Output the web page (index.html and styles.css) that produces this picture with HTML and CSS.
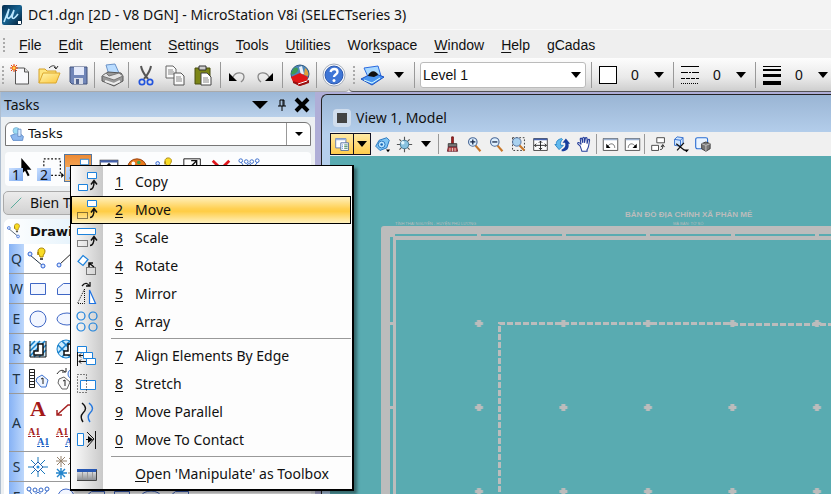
FILE: index.html
```html
<!DOCTYPE html>
<html lang="en">
<head>
<meta charset="utf-8">
<title>MicroStation V8i</title>
<link rel="stylesheet" href="styles.css">
</head>
<body>
<svg class="defs" aria-hidden="true">
  <defs>
    <linearGradient id="logo" x1="0" y1="0" x2="1" y2="1"><stop offset="0" stop-color="#022a4d"/><stop offset=".5" stop-color="#16618f"/><stop offset="1" stop-color="#041c33"/></linearGradient>
    <linearGradient id="folder" x1="0" y1="0" x2="1" y2="1"><stop offset="0" stop-color="#fff6b0"/><stop offset="1" stop-color="#fcc63c"/></linearGradient>
    <linearGradient id="metal" x1="0" y1="0" x2="0" y2="1"><stop offset="0" stop-color="#f4f4f4"/><stop offset="1" stop-color="#8c9096"/></linearGradient>
    <symbol id="new" viewBox="0 0 24 24"><path d="M6.500 5h9l4 4v12h-13z" fill="#f8f8fa" stroke="#555"/><path d="M15.500 5v4h4" fill="#ddd" stroke="#555"/><path d="M5 1v8M1 5h8M2 2l6 6M8 2L2 8" stroke="#e33b12"/><circle cx="5" cy="5" r="2" fill="#ffd04a" stroke="#f06a18"/></symbol>
    <symbol id="open" viewBox="0 0 24 24"><path d="M2 20V6h6l2 2h9v4" fill="#ffe680" stroke="#d6a128"/><path d="M2 20l4-10h17l-4 10z" fill="url(#folder)" stroke="#dba72d"/><path d="M12 5c3-3 6-3 7 0m-2-1l2 2 2-3" fill="none" stroke="#333"/></symbol>
    <symbol id="save" viewBox="0 0 24 24"><path d="M4 4h17v17H6l-2-2z" fill="#7186b8" stroke="#43537c"/><path d="M8 4h10v8H8z" fill="#e4eafa"/><path d="M8 15h9v6H8z" fill="#d7dce8"/><path d="M10 16h3v5h-3z" fill="#53648f"/></symbol>
    <symbol id="print" viewBox="0 0 24 24"><path d="M6 2l9-1 4 9-10 2z" fill="#b9dcff" stroke="#6b93c8"/><path d="M2 13l6-4 13 1 2 3v5l-9 5-12-5z" fill="#999" stroke="#555"/><path d="M2 13l12 4 9-4-4-3-10 3-3-3z" fill="#e3e3e3" stroke="#777"/><path d="M5 18l9 3 6-3" stroke="#eee" stroke-width="2" fill="none"/></symbol>
    <symbol id="cut" viewBox="0 0 24 24"><path d="M7 3c1 6 4 9 7 13M17 3c-1 6-4 9-7 13" fill="none" stroke="#555" stroke-width="2"/><circle cx="8" cy="19" r="2.7" fill="none" stroke="#2254dd" stroke-width="1.7"/><circle cx="16" cy="19" r="2.7" fill="none" stroke="#2254dd" stroke-width="1.7"/></symbol>
    <symbol id="copy" viewBox="0 0 24 24"><path d="M3 3h7l3 3v9H3z" fill="#fafafa" stroke="#666"/><path d="M5 7h5M5 9h6M5 11h6" stroke="#888"/><path d="M11 10h7l3 3v9H11z" fill="#fafafa" stroke="#555"/><path d="M13 14h5M13 16h6M13 18h6" stroke="#888"/></symbol>
    <symbol id="paste" viewBox="0 0 24 24"><path d="M4 5h15v16H4z" fill="#7b8516" stroke="#4b4e12"/><path d="M8 3h7v4H8z" fill="#ccc" stroke="#333"/><path d="M10 10h6l4 4v8H10z" fill="#fff" stroke="#444"/><path d="M12 15h5M12 17h6M12 19h6" stroke="#888"/></symbol>
    <symbol id="undo" viewBox="0 0 24 24"><path d="M8 14c3-6 11-5 11 0 0 3-2 4-3 5" fill="none" stroke="#888" stroke-width="1.3"/><path d="M4 10v8h8z"/></symbol>
    <symbol id="redo" viewBox="0 0 24 24"><path d="M15 14c-3-6-11-5-11 0 0 3 2 4 3 5" fill="none" stroke="#888" stroke-width="1.3"/><path d="M19 10v8h-8z"/></symbol>
    <symbol id="globe" viewBox="0 0 24 24"><circle cx="12" cy="11" r="9" fill="#4b86ba" stroke="#305a83"/><path d="M6 5c4-2 5 2 3 4s-5 4-6 1z" fill="#3d9a52"/><path d="M11 4l3-1 2 8-3 1z" fill="#e9eef5"/><path d="M17 5c3 2 4 6 3 8l-4-1z" fill="#e1a03c"/><path d="M3 14l9-4 8 4-2 7-7 2-6-4z" fill="#e01616"/><path d="M5 18l6 2 10-3v3l-9 3-7-3z" fill="#991010"/><path d="M10 21l9-3" stroke="#fff"/></symbol>
    <symbol id="help" viewBox="0 0 24 24"><circle cx="12" cy="12" r="11" fill="#fff" stroke="#a2abb8"/><circle cx="12" cy="12" r="9" fill="#3f76d6" stroke="#2a56ad"/><path d="M8.500 9c1-4 7-4 7 0 0 2.500-3.500 2.500-3.500 5" fill="none" stroke="#fff" stroke-width="2.300"/><circle cx="12" cy="17.500" r="1.500" fill="#fff"/></symbol>
    <symbol id="level" viewBox="0 0 24 24"><path d="M4 5l14-2 3 10-12 3z" fill="#a8d8ff" stroke="#2b6be0"/><path d="M1 16l12-6 11 4-12 8z" fill="#4b97f2" stroke="#1950c4"/><path d="M8 13c2-6 8-6 10-1l-4 2z" fill="#111"/><path d="M4 17l8 3 8-5" fill="none" stroke="#dff"/></symbol>
    <symbol id="sheet" viewBox="0 0 20 20"><path d="M2 3h12v11H2z" fill="#fff" stroke="#5170ad"/><path d="M2 3h12v2H2z" fill="#9ab2dd"/><path d="M8 8h9v9H8z" fill="#fff" stroke="#44639b"/><path d="M12 10.500h4M12 12.500h4M12 14.500h4" stroke="#2f7a4f"/><path d="M9.500 10.500h1M9.500 12.500h1M9.500 14.500h1" stroke="#3274d8"/></symbol>
    <symbol id="disc" viewBox="0 0 20 20"><path d="M2 12L6 5l9-3 3 3-3 9-8 3z" fill="#7cc4f4" stroke="#1869b8"/><circle cx="9" cy="10" r="4" fill="#bfe7ff" stroke="#1869b8"/><circle cx="9" cy="10" r="1.500" fill="#1869b8"/><path d="M14 16h5l-2.500 3z"/></symbol>
    <symbol id="sun" viewBox="0 0 20 20"><path d="M10 1v18M1 10h18M4 4l12 12M16 4L4 16" stroke="#555" stroke-width="1.300"/><circle cx="10" cy="10" r="5" fill="#88c2df" stroke="#3b7390"/><circle cx="8" cy="8" r="2" fill="#e2f7ff"/></symbol>
    <symbol id="brush" viewBox="0 0 20 20"><path d="M9 1h2v9H9z" fill="#b92222" stroke="#611"/><path d="M5 9h10v4H5z" fill="#777" stroke="#333"/><path d="M5 13h10l1 5H4z" fill="#bc4844" stroke="#623"/><path d="M7 14v4M10 14v4M13 14v4" stroke="#ddd"/></symbol>
    <symbol id="zin" viewBox="0 0 20 20"><path d="M11 11l6 7" stroke="#c8782a" stroke-width="2.500"/><circle cx="8" cy="7" r="5" fill="#dff0ff" stroke="#486796" stroke-width="1.300"/><path d="M5 7h6M8 4v6" stroke="#124" stroke-width="1.500"/></symbol>
    <symbol id="zout" viewBox="0 0 20 20"><path d="M11 11l6 7" stroke="#c8782a" stroke-width="2.500"/><circle cx="8" cy="7" r="5" fill="#dff0ff" stroke="#486796" stroke-width="1.300"/><path d="M5 7h6" stroke="#124" stroke-width="1.500"/></symbol>
    <symbol id="zwin" viewBox="0 0 20 20"><path d="M3 2h14v15H3z" fill="none" stroke="#222" stroke-dasharray="2 2"/><path d="M11 11l6 6" stroke="#c8782a" stroke-width="2.500"/><circle cx="8" cy="7" r="5" fill="#a9d1ef" stroke="#486796"/></symbol>
    <symbol id="fit" viewBox="0 0 20 20"><path d="M2 3h16v14H2z" fill="#fff" stroke="#333"/><path d="M2 3h16v2H2z" fill="#4562ad"/><path d="M10 6v10M3 11h14M8 8l2-2 2 2M8 14l2 2 2-2M5 9l-2 2 2 2M15 9l2 2-2 2" fill="none" stroke="#111"/></symbol>
    <symbol id="rotview" viewBox="0 0 20 20"><path d="M9 3C4 4 2 7 3 10H1l5 6 5-5H8c-1-3 0-5 2-7z" fill="#60b9ed" stroke="#2280c4"/><path d="M9 18c7 0 9-4 8-9h2l-5-6-4 5h3c1 4 0 6-4 8z" fill="#183e9d"/></symbol>
    <symbol id="hand" viewBox="0 0 20 20"><path d="M5 12L2 9c0-2 2-2 4 1L5 4c0-2 2-2 2 0l1 4V3c0-2 2-2 2 0v5l1-5c0-2 2-1 2 0v6l1-4c1-2 2-1 2 0-1 5-1 9-3 11v2H7z" fill="#fff" stroke="#263f9b" stroke-width="1.300"/></symbol>
    <symbol id="prev" viewBox="0 0 20 20"><path d="M1.500 3h17v14h-17z" fill="#fff" stroke="#444"/><path d="M2 3h16v2H2z" fill="#9ab0d0"/><path d="M7 12c2-4 8-4 8 2" fill="none" stroke="#666"/><path d="M5 9v5h5z"/></symbol>
    <symbol id="next" viewBox="0 0 20 20"><path d="M1.500 3h17v14h-17z" fill="#fff" stroke="#444"/><path d="M2 3h16v2H2z" fill="#9ab0d0"/><path d="M13 12c-2-4-8-4-8 2" fill="none" stroke="#666"/><path d="M15 9v5h-5z"/></symbol>
    <symbol id="cview" viewBox="0 0 20 20"><path d="M8 2h9v6H8zM2 11h8v6H2z" fill="#fff" stroke="#333"/><path d="M12 16c3 0 3-2 3-5m-2 2l2-3 2 3" fill="none" stroke="#111"/></symbol>
    <symbol id="clip" viewBox="0 0 20 20"><path d="M3 4l3-3 7 1v7l-3 3-7-1zM3 4l7 1v7M10 5l3-3" fill="#cfe5ff" stroke="#2363c9"/><path d="M5 9l10 8M14 8L6 17" stroke="#111" stroke-width="1.500"/><path d="M14 16h6l-3 3z"/></symbol>
    <symbol id="mask" viewBox="0 0 20 20"><rect x="2" y="2" width="14" height="13" rx="2" fill="#eaf4ff" stroke="#2a6dd2" stroke-width="1.300"/><path d="M9 9l5-2 5 2v6l-5 3-5-3z" fill="#777" stroke="#333"/><path d="M9 9l5 2 5-2M14 11v7" stroke="#ccc" fill="none"/></symbol>

    <symbol id="m1" viewBox="0 0 24 24"><path d="M12.500 2.500h9v6h-9zM3.500 14.500h9v6h-9z" fill="#fff" stroke="#1d82dc"/><path d="M15 19.500c3 0 4-3 4-8m-3 3l3-4 3 4" fill="none" stroke="#111" stroke-width="1.500"/></symbol>
    <symbol id="m2" viewBox="0 0 24 24"><path d="M12.500 2.500h9v6h-9z" fill="#fff" stroke="#1d82dc"/><path d="M2.500 14.500h10v6h-10z" fill="none" stroke="#111" stroke-dasharray="1 1"/><path d="M15 19.500c3 0 4-3 4-8m-3 3l3-4 3 4" fill="none" stroke="#111" stroke-width="1.500"/></symbol>
    <symbol id="m3" viewBox="0 0 24 24"><path d="M2.500 2.500h18v6h-18z" fill="#fff" stroke="#1d82dc"/><path d="M2.500 14.500h10v6h-10z" fill="none" stroke="#111" stroke-dasharray="1 1"/><path d="M15 19.500c3 0 4-3 4-8m-3 3l3-4 3 4" fill="none" stroke="#111" stroke-width="1.500"/></symbol>
    <symbol id="m4" viewBox="0 0 24 24"><path d="M8 1.500l5 4-5 6-5-4z" fill="#fff" stroke="#1d82dc" stroke-width="1.200"/><path d="M11.500 13.500h9v7h-9z" fill="none" stroke="#111" stroke-dasharray="1 1"/><path d="M19 13l-5-4m0 4V9h4" fill="none" stroke="#111" stroke-width="1.500"/></symbol>
    <symbol id="m5" viewBox="0 0 24 24"><path d="M9.500 7v14.500h-7z" fill="none" stroke="#111" stroke-dasharray="1 1"/><path d="M14.500 8v13.500h6z" fill="#fff" stroke="#1d72e2" stroke-width="1.200"/><path d="M7 4c3-4 6-3 7 0m-3 0h4V0" fill="none" stroke="#111" stroke-width="1.300"/></symbol>
    <symbol id="m6" viewBox="0 0 24 24" fill="none" stroke="#1d82dc" stroke-width="1.200"><circle cx="6" cy="6" r="4"/><circle cx="18" cy="6" r="4"/><circle cx="6" cy="17" r="4"/><circle cx="18" cy="17" r="4"/></symbol>
    <symbol id="m7" viewBox="0 0 24 24"><path d="M2.500 2.500h9v6h-9zM8.500 8.500h9v6h-9zM11.500 14.500h9v6h-9z" fill="#fff" stroke="#1d82dc"/><path d="M2.500 8v14M8 11.500H4l2-2m-2 2l2 2M11 17.500H4l2-2m-2 2l2 2" fill="none" stroke="#111"/></symbol>
    <symbol id="m8" viewBox="0 0 24 24"><path d="M5.500 8.500h15v9h-15z" fill="#fff" stroke="#1d82dc"/><path d="M2.500 2.500h9v18h-9z" fill="none" stroke="#111" stroke-dasharray="1 2"/></symbol>
    <symbol id="m9" viewBox="0 0 24 24" fill="none" stroke-width="1.400"><path d="M7 3c5 4 4 7 1 10s-2 6 0 9" stroke="#111"/><path d="M14 3c5 4 4 7 1 10s-2 6 0 9" stroke="#2578df"/></symbol>
    <symbol id="m0" viewBox="0 0 24 24"><path d="M2.500 5.500h6v12h-6z" fill="#fff" stroke="#1d82dc"/><path d="M20.500 3v18M11 11.500h6M12 4l7 7-7 8" fill="none" stroke="#111"/><path d="M13 8l5 3.500-5 3.500z"/></symbol>
    <symbol id="mt" viewBox="0 0 24 24"><path d="M2 7h20v11H2z" fill="url(#metal)"/><path d="M2 7h20v3H2z" fill="#2858b2"/><path d="M7.500 10v7M12.500 10v7M17.500 10v7" stroke="#999"/><path d="M21.500 8v10.500H2" fill="none" stroke="#444"/></symbol>
    <symbol id="key" viewBox="0 0 24 24"><path d="M4 8l13 11" stroke="#234"/><circle cx="4" cy="7" r="2" fill="#dce9ff" stroke="#2f62d2"/><circle cx="17" cy="19" r="2" fill="#dce9ff" stroke="#2f62d2"/><path d="M12 8V4c0-4 7-4 7 0 0 3-2 3-2 6h-3c0-2-2-2-2-5z" fill="#f9dc25" stroke="#a88307"/><path d="M14 11h3v2h-3z" fill="#555"/></symbol>
    <symbol id="line" viewBox="0 0 24 24"><path d="M5 18L20 4" stroke="#222"/><circle cx="5" cy="18" r="2" fill="#dce9ff" stroke="#2f62d2"/><circle cx="20" cy="4" r="2" fill="#dce9ff" stroke="#2f62d2"/></symbol>
    <symbol id="rect" viewBox="0 0 24 24"><path d="M4.500 6.500h15v11h-15z" fill="#f2f6ff" stroke="#3f67c5"/></symbol>
    <symbol id="poly" viewBox="0 0 24 24"><path d="M3.500 17.500v-6l6-5h13v11z" fill="#f2f6ff" stroke="#3f67c5"/></symbol>
    <symbol id="circ" viewBox="0 0 24 24"><circle cx="12" cy="12" r="8" fill="#f2f6ff" stroke="#3f67c5"/></symbol>
    <symbol id="oval" viewBox="0 0 24 24"><ellipse cx="13" cy="12" rx="10" ry="6" fill="#f2f6ff" stroke="#3f67c5"/></symbol>
    <symbol id="hatch" viewBox="0 0 24 24"><path d="M4 4h16v16H4z" fill="#c9ebff"/><path d="M4 9l5-5M4 14L14 4M4 19L19 4M8 20L20 8M13 20l7-7" stroke="#147fcb" stroke-width="1.500"/><path d="M8 18v-4h4V7h5v11z" fill="#fff" stroke="#111" stroke-width="1.500"/><path d="M4 4v16h16V4" fill="none" stroke="#111"/></symbol>
    <symbol id="cross" viewBox="0 0 24 24"><circle cx="12" cy="12" r="9" fill="#c9ebff" stroke="#147fcb"/><path d="M4 8l12 12M8 4l12 12M4 16L16 4M8 20L20 8" stroke="#147fcb" stroke-width="1.500"/><path d="M10 18v-4h4V7h4v11z" fill="#fff" stroke="#111" stroke-width="1.500"/></symbol>
    <symbol id="tag" viewBox="0 0 24 24"><path d="M3.500 2.500h5v18h-5zM3 5.500h5M3 8.500h5M3 11.500h5M3 14.500h5M3 17.500h5" fill="#fff" stroke="#222"/><path d="M11 11l5-3 6 5-2 7h-5l-5-6z" fill="#eef5ff" stroke="#3f73d1"/><path d="M15 12l2-1v6" fill="none" stroke="#222"/></symbol>
    <symbol id="tag2" viewBox="0 0 24 24"><path d="M5 12l5-2 6 5-3 7H8l-4-6z" fill="#fafafa" stroke="#666"/><path d="M9 14l2-1v6M3 7c3-5 7-4 8-2m-3 0h4V1" fill="none" stroke="#222"/><circle cx="19" cy="7" r="5" fill="#eef5ff" stroke="#3f73d1"/></symbol>
    <symbol id="spark" viewBox="0 0 24 24"><path d="M12 2v20M2 12h20M5 5l14 14M19 5L5 19" stroke="#1979be"/><path d="M12 7l5 5-5 5-5-5z" fill="#fff" stroke="#235eaa"/><circle cx="12" cy="12" r="1.500" fill="#248bdc"/></symbol>
    <symbol id="sparks" viewBox="0 0 24 24"><path d="M7 1v11M2 6h11M3 2l8 8M11 2l-8 8M19 1v11M15 3l8 7M22 2l-8 8" stroke="#96826d"/><path d="M7 13v11M2 18h11M3 14l8 8M11 14l-8 8" stroke="#2384cb" stroke-width="1.400"/><path d="M19 13v11M14 18h10" stroke="#96826d"/></symbol>
    <symbol id="arrow" viewBox="0 0 24 24"><path d="M8 1v18l4-4 3 6 2-1-3-6h5z"/></symbol>
    <symbol id="fence" viewBox="0 0 24 24"><path d="M2 2h18v18H2z" fill="none" stroke="#111" stroke-width="1.300" stroke-dasharray="2 2"/><path d="M21 17l3 3-3 3z"/></symbol>
    <symbol id="palette" viewBox="0 0 24 24"><ellipse cx="12" cy="11" rx="10" ry="9" fill="#e8791d" stroke="#913a08"/><circle cx="8" cy="7" r="2" fill="#fff"/><circle cx="14" cy="6" r="2" fill="#41a650"/></symbol>
    <symbol id="points" viewBox="0 0 24 24"><path d="M3 5l4 6 5-4 5 4 5-6" fill="none" stroke="#3166c8"/><g fill="#fff" stroke="#3166c8"><circle cx="3" cy="4" r="2"/><circle cx="9" cy="5" r="2"/><circle cx="15" cy="5" r="2"/><circle cx="21" cy="4" r="2"/></g></symbol>
    <symbol id="ref" viewBox="0 0 24 24"><path d="M2 2h18v19H2z" fill="#fff" stroke="#111"/><path d="M8 12l8-8m-6 0h6v6" fill="none" stroke="#111" stroke-width="1.500"/></symbol>
    <symbol id="del" viewBox="0 0 24 24"><path d="M3 4l16 16M21 4L5 20" stroke="#df161b" stroke-width="3"/></symbol>
    <symbol id="task" viewBox="0 0 20 20"><path d="M2 12l10-4 6 5-1 5H5z" fill="#8db8ee" stroke="#5583c4"/><circle cx="9" cy="6" r="4" fill="#9adcf4" stroke="#7aaed2"/><path d="M11 4h4v9h-4z" fill="#d7eaff" stroke="#6289c1"/></symbol>
  </defs>
</svg>

<header class="titlebar">
  <svg class="logo" viewBox="0 0 20 20"><rect width="20" height="20" rx="2" fill="url(#logo)"/><path d="M2 17L7 4 5 12c1 3 4 1 7-7l-2 7c1 3 3 1 6-3" fill="none" stroke="#bde8ff" stroke-width="1.600"/><path d="M16 16h3v3h-3z" fill="#fff"/></svg>
  <h1>DC1.dgn [2D - V8 DGN] - MicroStation V8i (SELECTseries 3)</h1>
</header>
<nav class="menubar">
  <span class="grip"></span>
  <a href="#"><u>F</u>ile</a><a href="#"><u>E</u>dit</a><a href="#">E<u>l</u>ement</a><a href="#"><u>S</u>ettings</a><a href="#"><u>T</u>ools</a><a href="#"><u>U</u>tilities</a><a href="#">Wor<u>k</u>space</a><a href="#"><u>W</u>indow</a><a href="#"><u>H</u>elp</a><a href="#">gCadas</a>
</nav>
<div class="toolbars">
  <div class="bar standard">
    <span class="grip"></span>
    <button aria-label="New"><svg><use href="#new"/></svg></button>
    <button aria-label="Open"><svg><use href="#open"/></svg></button>
    <button aria-label="Save"><svg><use href="#save"/></svg></button>
    <i class="sep"></i>
    <button aria-label="Print"><svg><use href="#print"/></svg></button>
    <i class="sep"></i>
    <button aria-label="Cut"><svg><use href="#cut"/></svg></button>
    <button aria-label="Copy"><svg><use href="#copy"/></svg></button>
    <button aria-label="Paste"><svg><use href="#paste"/></svg></button>
    <i class="sep"></i>
    <button aria-label="Undo"><svg><use href="#undo"/></svg></button>
    <button aria-label="Redo"><svg><use href="#redo"/></svg></button>
    <i class="sep"></i>
    <button aria-label="Connect"><svg><use href="#globe"/></svg></button>
    <i class="sep"></i>
    <button aria-label="Help"><svg><use href="#help"/></svg></button>
  </div>
  <div class="bar attributes">
    <span class="grip"></span>
    <button aria-label="Level manager"><svg><use href="#level"/></svg></button>
    <button class="drop" aria-label="Level options"><i class="caret"></i></button>
    <i class="sep"></i>
    <div class="level"><select aria-label="Active level"><option>Level 1</option></select><i class="caret"></i></div>
    <i class="sep"></i>
    <button class="attr" aria-label="Color"><i class="swatch"></i><span>0</span><i class="caret"></i></button>
    <i class="sep"></i>
    <button class="attr" aria-label="Line style"><svg class="lines" viewBox="0 0 18 20"><path d="M0 1.500h18"/><path d="M0 7.500h18" stroke-dasharray="7 1 2 1"/><path d="M0 13.500h18" stroke-dasharray="4 1"/><path d="M0 18.500h18" stroke-dasharray="1 1"/></svg><span>0</span><i class="caret"></i></button>
    <i class="sep"></i>
    <button class="attr" aria-label="Line weight"><svg class="lines" viewBox="0 0 18 20"><path d="M0 1.500h18"/><path d="M0 5h18" stroke-width="2"/><path d="M0 10.500h18" stroke-width="3"/><path d="M0 18h18" stroke-width="4"/></svg><span>0</span><i class="caret"></i></button>
  </div>
</div>

<main class="workspace">
  <aside class="tasks">
    <header class="tasks-head"><h2>Tasks</h2><i class="caret big"></i><svg class="pin" viewBox="0 0 8 12"><path d="M2 1h4v6M2 1v6M5 1v6M0 7h8M4 7v5" fill="none" stroke="#000"/></svg><svg class="close" viewBox="0 0 16 16"><path d="M2 2l12 12M14 2L2 14" stroke="#000" stroke-width="4"/></svg></header>
    <div class="task-pick"><svg><use href="#task"/></svg><select aria-label="Task"><option>Tasks</option></select><span class="pick-arrow"><i class="caret small"></i></span></div>
    <div class="main-tools">
      <button aria-label="Element selection"><svg><use href="#arrow"/></svg><b>1</b></button>
      <button aria-label="Fence"><svg><use href="#fence"/></svg><b>2</b></button>
      <button class="active" aria-label="Manipulate"><svg><use href="#m1"/></svg><b>3</b></button>
      <button aria-label="View"><svg><use href="#fit"/></svg></button>
      <button aria-label="Attributes"><svg><use href="#palette"/></svg></button>
      <button aria-label="Groups"><svg><use href="#key"/></svg></button>
      <button aria-label="Modify"><svg><use href="#ref"/></svg></button>
      <button aria-label="Delete"><svg><use href="#del"/></svg></button>
      <button aria-label="Measure"><svg><use href="#points"/></svg></button>
    </div>
    <button class="task-tab"><svg viewBox="0 0 16 16"><path d="M2 14L14 2" stroke="#48a392"/></svg>Bien Tap</button>
    <section class="drawing">
      <h3><svg><use href="#key"/></svg>Drawing</h3>
      <div class="row"><kbd>Q</kbd><svg><use href="#key"/></svg><svg><use href="#line"/></svg></div>
      <div class="row"><kbd>W</kbd><svg><use href="#rect"/></svg><svg><use href="#poly"/></svg></div>
      <div class="row"><kbd>E</kbd><svg><use href="#circ"/></svg><svg><use href="#oval"/></svg></div>
      <div class="row"><kbd>R</kbd><svg><use href="#hatch"/></svg><svg><use href="#cross"/></svg></div>
      <div class="row"><kbd>T</kbd><svg><use href="#tag"/></svg><svg><use href="#tag2"/></svg></div>
      <div class="row tall"><kbd>A</kbd><span class="letter">A</span><svg viewBox="0 0 24 24"><path d="M3 18L14 8h8M3 13v5h5" fill="none" stroke="#a52020" stroke-width="1.500"/></svg><span class="pair"><em>A1</em><em>A1</em></span><span class="pair"><em>A1</em><em>A1</em></span></div>
      <div class="row"><kbd>S</kbd><svg><use href="#spark"/></svg><svg><use href="#sparks"/></svg></div>
      <div class="row"><kbd>F</kbd><svg><use href="#points"/></svg><svg><use href="#circ"/></svg><svg><use href="#poly"/></svg><svg><use href="#rect"/></svg><svg><use href="#oval"/></svg><svg><use href="#poly"/></svg></div>
    </section>

    <div class="menu" role="menu">
      <button role="menuitem"><svg><use href="#m1"/></svg><u>1</u><span>Copy</span></button>
      <button role="menuitem" class="hot"><svg><use href="#m2"/></svg><u>2</u><span>Move</span></button>
      <button role="menuitem"><svg><use href="#m3"/></svg><u>3</u><span>Scale</span></button>
      <button role="menuitem"><svg><use href="#m4"/></svg><u>4</u><span>Rotate</span></button>
      <button role="menuitem"><svg><use href="#m5"/></svg><u>5</u><span>Mirror</span></button>
      <button role="menuitem"><svg><use href="#m6"/></svg><u>6</u><span>Array</span></button>
      <hr>
      <button role="menuitem"><svg><use href="#m7"/></svg><u>7</u><span>Align Elements By Edge</span></button>
      <button role="menuitem"><svg><use href="#m8"/></svg><u>8</u><span>Stretch</span></button>
      <button role="menuitem"><svg><use href="#m9"/></svg><u>9</u><span>Move Parallel</span></button>
      <button role="menuitem"><svg><use href="#m0"/></svg><u>0</u><span>Move To Contact</span></button>
      <hr>
      <button role="menuitem"><svg><use href="#mt"/></svg><i></i><span><u>O</u>pen 'Manipulate' as Toolbox</span></button>
    </div>
  </aside>

  <section class="view">
    <header class="view-head"><span class="view-icon"></span><h2>View 1, Model</h2></header>
    <div class="view-tools">
      <span class="split"><button aria-label="View attributes"><svg><use href="#sheet"/></svg></button><button class="arrow" aria-label="View attribute options"><i class="caret"></i></button></span>
      <button aria-label="Display style"><svg><use href="#disc"/></svg></button>
      <button aria-label="Brightness"><svg><use href="#sun"/></svg></button>
      <button class="arrow" aria-label="Brightness options"><i class="caret"></i></button>
      <i class="sep"></i>
      <button aria-label="Update view"><svg><use href="#brush"/></svg></button>
      <button aria-label="Zoom in"><svg><use href="#zin"/></svg></button>
      <button aria-label="Zoom out"><svg><use href="#zout"/></svg></button>
      <button aria-label="Window area"><svg><use href="#zwin"/></svg></button>
      <button aria-label="Fit view"><svg><use href="#fit"/></svg></button>
      <button aria-label="Rotate view"><svg><use href="#rotview"/></svg></button>
      <button aria-label="Pan view"><svg><use href="#hand"/></svg></button>
      <i class="sep"></i>
      <button aria-label="View previous"><svg><use href="#prev"/></svg></button>
      <button aria-label="View next"><svg><use href="#next"/></svg></button>
      <i class="sep"></i>
      <button aria-label="Copy view"><svg><use href="#cview"/></svg></button>
      <button aria-label="Clip volume"><svg><use href="#clip"/></svg></button>
      <button aria-label="Clip mask"><svg><use href="#mask"/></svg></button>
    </div>
    <svg class="canvas" role="img" aria-label="Cadastral map">
      <defs>
        <pattern id="grid" x="106" y="125" width="84.500" height="84" patternUnits="userSpaceOnUse"><path d="M41 39h4v2h2v3h-2v2h-4v-2h-2v-3h2z" fill="#bcbcbc"/></pattern>
      </defs>
      <rect x="110" y="130" width="1600" height="1200" fill="url(#grid)"/>
      <g fill="#bcbcbc">
        <path d="M51 1400V73q0-3 3-3h1700v8H60v1322z"/>
        <path d="M60 78h5v2h1700v4H66v1316h-3V81h-3z"/>
        <path d="M60 166h5v3h-5zM60 250h5v3h-5zM147 78h4v2h-4zM232 78h4v2h-4zM316 78h4v2h-4zM401 78h4v2h-4zM485 78h4v2h-4z"/>
        <text x="65" y="69" class="note">TỈNH THÁI NGUYÊN - HUYỆN PHÚ LƯƠNG</text>
        <text x="295" y="61" class="map-title">BẢN ĐỒ ĐỊA CHÍNH XÃ PHẤN MỄ</text>
        <text x="343" y="69" class="note">MÃ BẢN: TỜ SỐ</text>
      </g>
      <path d="M169.500 1400V167.500H402M402 168.500H1700" fill="none" stroke="#bcbcbc" stroke-width="3" stroke-dasharray="6 2"/>
    </svg>
  </section>
</main>
</body>
</html>
```
FILE: styles.css
```css
* { box-sizing: border-box; }
body {
  margin: 0;
  height: 100vh;
  display: flex;
  flex-direction: column;
  overflow: hidden;
  background: #f0f0f0;
  color: #111;
  font: 14px/20px "Noto Sans", "Open Sans", sans-serif;
}
h1, h2, h3 { margin: 0; font-weight: 400; }
button { display: flex; align-items: center; justify-content: center; padding: 0; border: 0; background: none; color: inherit; font: inherit; flex: none; }
svg { flex: none; display: block; }
select { appearance: none; border: 0; background: none; color: #111; padding: 0; outline: 0; }
u { text-underline-offset: 2px; }
.defs { position: absolute; width: 0; height: 0; }

.titlebar { display: flex; align-items: center; gap: 6px; height: 29px; padding-left: 2px; background: #f3f3f3; flex: none; }
.titlebar h1 { font-size: 14px; }
.logo { width: 20px; height: 20px; }
.menubar { display: flex; align-items: center; height: 29px; padding: 2px 0 0 3px; background: #efefef; border-top: 1px solid #fafafa; font: 14px/20px "Liberation Sans", sans-serif; flex: none; }
.menubar a { color: #111; text-decoration: none; margin-right: 17px; }
.grip { width: 2px; height: 18px; background: repeating-linear-gradient(#aaa 0 2px, transparent 2px 4px); flex: none; }
.menubar .grip { height: 14px; margin-right: 14px; }

.toolbars { display: flex; height: 34px; background: #f0f0f0; flex: none; }
.bar { display: flex; align-items: center; background: linear-gradient(#fdfdfd, #e9e9e9 60%, #cecece); border-bottom: 1px solid #aaa; }
.standard { padding: 0 3px 0 2px; width: 349px; flex: none; justify-content: space-between; border-radius: 0 0 4px 0; }
.standard svg, .attributes > button > svg { width: 24px; height: 24px; }
.attributes { flex: 1; gap: 5px; padding-left: 4px; border-radius: 0 0 0 4px; border-bottom-color: #555; }
.sep { width: 1px; height: 26px; background: #999; flex: none; }
.caret { width: 0; height: 0; border: 5px solid transparent; border-top: 6px solid #000; border-bottom: 0; flex: none; }
.caret.small { border-width: 4px 4px 0; }
.caret.big { border-width: 8px 8px 0; }
.drop { width: 20px; height: 24px; }
.level { display: flex; align-items: center; width: 166px; height: 26px; padding: 0 4px 0 2px; background: #fff; border: 1px solid #bbb; border-radius: 3px; flex: none; }
.level select { flex: 1; font: 14px/20px "Liberation Sans", sans-serif; }
.attr { width: 71px; height: 26px; padding-left: 2px; justify-content: flex-start; font: 14px/20px "Liberation Sans", sans-serif; }
.attr span { width: 8px; margin: 0 15px 0 14px; }
.swatch { width: 18px; height: 18px; background: #fff; border: 1px solid #000; flex: none; }
.attributes .attr > .lines { width: 18px; height: 20px; }
.lines { fill: none; stroke: #000; }

.workspace { flex: 1; min-height: 0; display: grid; grid-template-columns: 321px minmax(0, 1fr); background: #afaed7; }
.tasks { position: relative; display: flex; flex-direction: column; min-height: 0; margin-right: 6px; background: #edf0f2; border-left: 1px solid #aebed0; }
.tasks-head { display: flex; align-items: center; height: 25px; padding: 0 5px 0 3px; background: linear-gradient(#9ab6d6, #b9d0ea); flex: none; }
.tasks-head h2 { flex: 1; font-size: 14px; }
.pin { width: 8px; height: 12px; margin: 0 8px 0 10px; }
.close { width: 16px; height: 16px; }
.task-pick { display: flex; align-items: center; height: 24px; margin: 5px 4px 0; background: #fff; border: 1px solid #777; border-radius: 6px 6px 0 0; flex: none; }
.task-pick svg { width: 16px; height: 16px; margin: 0 3px; }
.task-pick select { flex: 1; font: 13px/20px "DejaVu Sans", sans-serif; }
.pick-arrow { display: flex; align-items: center; justify-content: center; align-self: stretch; width: 24px; border-left: 1px solid #999; }
.main-tools { display: flex; gap: 0; height: 34px; margin: 6px 4px 0; padding: 2px 3px; background: #fcfdfe; border-radius: 4px; flex: none; }
.main-tools button { position: relative; width: 28px; height: 28px; justify-content: flex-end; }
.main-tools svg { width: 22px; height: 22px; }
.main-tools b { position: absolute; left: 1px; bottom: 1px; width: 14px; height: 13px; background: linear-gradient(135deg, #c9dfff, #7aa8ee); font: 14px/13px "Noto Sans", sans-serif; text-align: center; }
.main-tools .active { background: linear-gradient(#ed8a34, #fac27a); border: 1px solid #56779e; }
.task-tab { justify-content: flex-start; gap: 7px; height: 24px; width: 306px; margin: 5px 0 0 2px; padding-left: 5px; background: linear-gradient(#ececec, #d2d2d2); border: 1px solid #aaa; border-radius: 5px; }
.task-tab svg { width: 14px; height: 14px; }
.drawing { flex: 1; min-height: 0; overflow: hidden; margin: 4px 4px 0 3px; background: #fff; border-radius: 6px 6px 0 0; }
.drawing h3 { display: flex; align-items: center; gap: 7px; height: 25px; padding-left: 2px; background: linear-gradient(90deg, #fff, #bfe0f6 60%); font: bold 13px/20px "DejaVu Sans", sans-serif; }
.drawing h3 svg { width: 17px; height: 17px; }
.row { display: grid; grid-template-columns: 15px repeat(9, 28px); align-items: center; height: 30px; margin-left: 5px; border-bottom: 1px solid #999; }
.row kbd { display: flex; align-items: center; justify-content: center; align-self: stretch; font: 14px/16px "Noto Sans", sans-serif; color: #234; background: linear-gradient(90deg, #86b2f5, #bdd7fb); }
.row svg { width: 24px; height: 24px; margin-left: 2px; }
.row.tall { height: 58px; grid-template-columns: 15px 28px 28px; grid-template-rows: 29px 28px; }
.tall kbd { grid-row: 1 / 3; }
.letter { text-align: center; color: #a31919; font: bold 22px/24px "Liberation Serif", serif; }
.pair { display: flex; flex-direction: column; padding-left: 4px; font: bold 10px/9px "Liberation Serif", serif; }
.pair em { font-style: normal; color: #a52020; border-bottom: 1px dashed; align-self: flex-start; }
.pair em + em { color: #205fc4; margin-left: 9px; }

.menu { position: absolute; z-index: 2; left: 69px; top: 73px; width: 284px; padding: 2px 1px 1px 0; background: linear-gradient(90deg, #fdfdfd, #c9c9c9) 0 0 / 32px 100% no-repeat #fdfdfd; border: 1px solid #000; border-width: 1px 2px 2px 1px; box-shadow: 3px 3px 3px #0006; }
.menu button { display: grid; grid-template-columns: 32px 12px 1fr; column-gap: 8px; width: 100%; height: 28px; padding: 0 0 0 4px; text-align: left; }
.menu svg { width: 24px; height: 24px; }
.menu .hot { padding-left: 3px; background: linear-gradient(#fff0bd, #ffd052 45%, #ffcd45 55%, #fff1bf); border: 1px solid #000; }
.menu hr { height: 1px; margin: 2px 0 3px 40px; border: 0; background: #999; }

.view { display: flex; flex-direction: column; min-width: 0; min-height: 0; margin-top: 2px; padding-left: 8px; background: linear-gradient(#9ab5d4, #b5cfec 40px); border: 1px solid #222; border-width: 1px 0 0 1px; border-radius: 6px 0 0 0; }
.view-head { display: flex; align-items: center; gap: 5px; height: 37px; padding: 8px 0 0 3px; flex: none; }
.view-head h2 { font-size: 14px; }
.view-icon { width: 18px; height: 18px; border: 4px solid #d0dded; border-radius: 4px; background: #444; }
.view-tools { display: flex; align-items: center; height: 24px; background: #f0f0f0; flex: none; }
.view-tools button { width: 22px; height: 22px; }
.view-tools svg { width: 17px; height: 17px; }
.view-tools .sep { height: 20px; margin: 0 2px 0 1px; }
.split { display: flex; border: 1px solid #112; background: linear-gradient(#ffe9a5, #ffcc4c); }
.view-tools .split button { height: 20px; }
.view-tools .split .arrow { width: 17px; border-left: 1px solid #112; }
.canvas { flex: 1; width: 100%; min-height: 0; background: #59abb1; }
.note { font: 4px "Liberation Sans", sans-serif; }
.map-title { font: bold 8px "Liberation Sans", sans-serif; }
```
